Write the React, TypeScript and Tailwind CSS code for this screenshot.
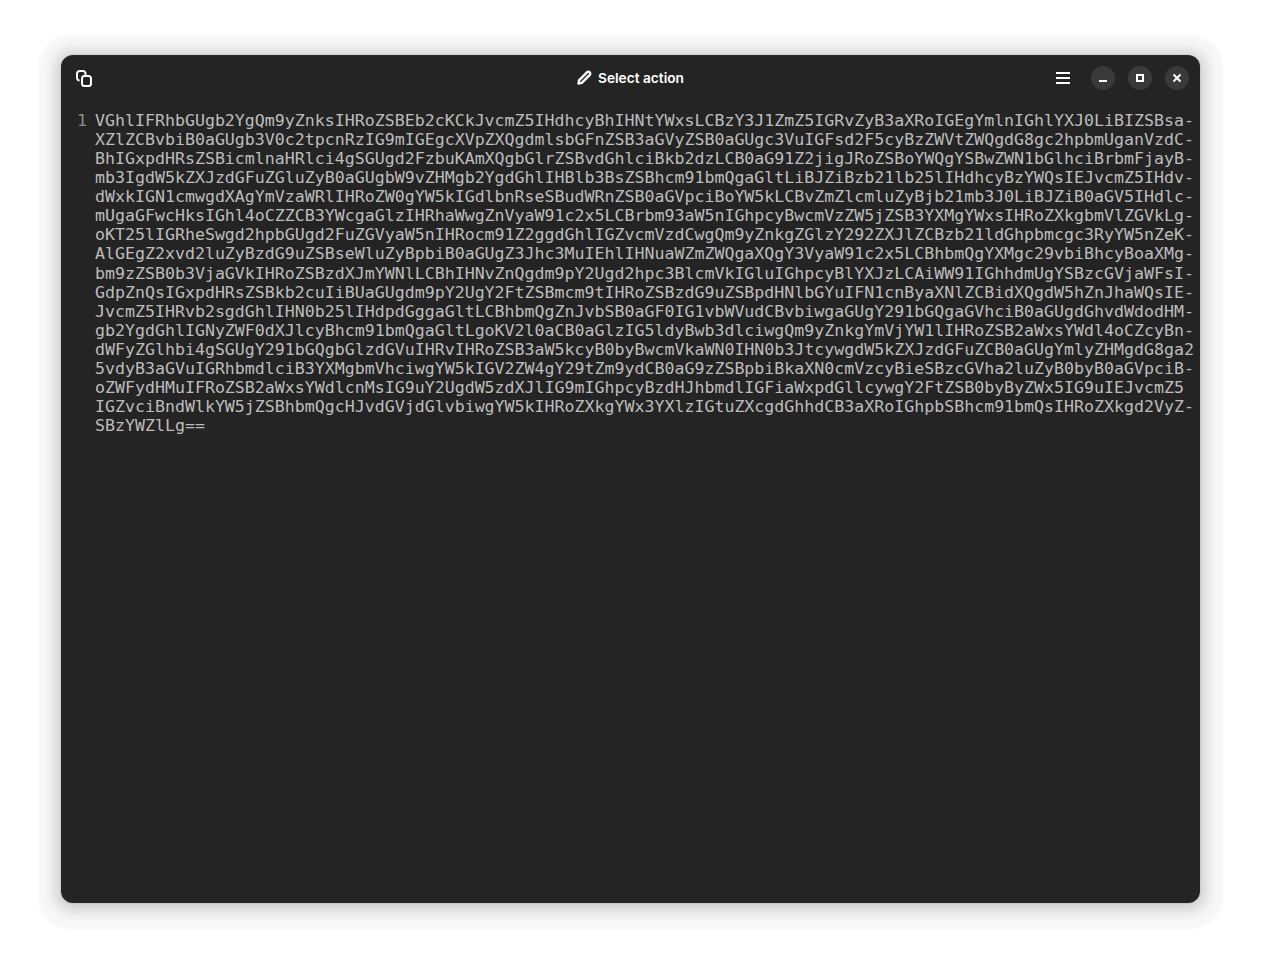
const lines = [
    'VGhlIFRhbGUgb2YgQm9yZnksIHRoZSBEb2cKCkJvcmZ5IHdhcyBhIHNtYWxsLCBzY3J1ZmZ5IGRvZyB3aXRoIGEgYmlnIGhlYXJ0LiBIZSBsa-',
    'XZlZCBvbiB0aGUgb3V0c2tpcnRzIG9mIGEgcXVpZXQgdmlsbGFnZSB3aGVyZSB0aGUgc3VuIGFsd2F5cyBzZWVtZWQgdG8gc2hpbmUganVzdC-',
    'BhIGxpdHRsZSBicmlnaHRlci4gSGUgd2FzbuKAmXQgbGlrZSBvdGhlciBkb2dzLCB0aG91Z2jigJRoZSBoYWQgYSBwZWN1bGlhciBrbmFjayB-',
    'mb3IgdW5kZXJzdGFuZGluZyB0aGUgbW9vZHMgb2YgdGhlIHBlb3BsZSBhcm91bmQgaGltLiBJZiBzb21lb25lIHdhcyBzYWQsIEJvcmZ5IHdv-',
    'dWxkIGN1cmwgdXAgYmVzaWRlIHRoZW0gYW5kIGdlbnRseSBudWRnZSB0aGVpciBoYW5kLCBvZmZlcmluZyBjb21mb3J0LiBJZiB0aGV5IHdlc-',
    'mUgaGFwcHksIGhl4oCZZCB3YWcgaGlzIHRhaWwgZnVyaW91c2x5LCBrbm93aW5nIGhpcyBwcmVzZW5jZSB3YXMgYWxsIHRoZXkgbmVlZGVkLg-',
    'oKT25lIGRheSwgd2hpbGUgd2FuZGVyaW5nIHRocm91Z2ggdGhlIGZvcmVzdCwgQm9yZnkgZGlzY292ZXJlZCBzb21ldGhpbmcgc3RyYW5nZeK-',
    'AlGEgZ2xvd2luZyBzdG9uZSBseWluZyBpbiB0aGUgZ3Jhc3MuIEhlIHNuaWZmZWQgaXQgY3VyaW91c2x5LCBhbmQgYXMgc29vbiBhcyBoaXMg-',
    'bm9zZSB0b3VjaGVkIHRoZSBzdXJmYWNlLCBhIHNvZnQgdm9pY2Ugd2hpc3BlcmVkIGluIGhpcyBlYXJzLCAiWW91IGhhdmUgYSBzcGVjaWFsI-',
    'GdpZnQsIGxpdHRsZSBkb2cuIiBUaGUgdm9pY2UgY2FtZSBmcm9tIHRoZSBzdG9uZSBpdHNlbGYuIFN1cnByaXNlZCBidXQgdW5hZnJhaWQsIE-',
    'JvcmZ5IHRvb2sgdGhlIHN0b25lIHdpdGggaGltLCBhbmQgZnJvbSB0aGF0IG1vbWVudCBvbiwgaGUgY291bGQgaGVhciB0aGUgdGhvdWdodHM-',
    'gb2YgdGhlIGNyZWF0dXJlcyBhcm91bmQgaGltLgoKV2l0aCB0aGlzIG5ldyBwb3dlciwgQm9yZnkgYmVjYW1lIHRoZSB2aWxsYWdl4oCZcyBn-',
    'dWFyZGlhbi4gSGUgY291bGQgbGlzdGVuIHRvIHRoZSB3aW5kcyB0byBwcmVkaWN0IHN0b3JtcywgdW5kZXJzdGFuZCB0aGUgYmlyZHMgdG8ga2',
    '5vdyB3aGVuIGRhbmdlciB3YXMgbmVhciwgYW5kIGV2ZW4gY29tZm9ydCB0aG9zZSBpbiBkaXN0cmVzcyBieSBzcGVha2luZyB0byB0aGVpciB-',
    'oZWFydHMuIFRoZSB2aWxsYWdlcnMsIG9uY2UgdW5zdXJlIG9mIGhpcyBzdHJhbmdlIGFiaWxpdGllcywgY2FtZSB0byByZWx5IG9uIEJvcmZ5',
    'IGZvciBndWlkYW5jZSBhbmQgcHJvdGVjdGlvbiwgYW5kIHRoZXkgYWx3YXlzIGtuZXcgdGhhdCB3aXRoIGhpbSBhcm91bmQsIHRoZXkgd2VyZ-',
    'SBzYWZlLg==',
];

export default function App() {
    return (
        <div className="h-[970px] w-[1261px] bg-white pt-[55px] pl-[61px] overflow-hidden">
            <div className="w-[1139px] h-[848px] rounded-[12px] bg-[#242424] flex flex-col shadow-[0_0_0_1px_rgba(0,0,0,0.05),0_2px_12px_4px_rgba(0,0,0,0.14),0_2px_10px_13px_rgba(0,0,0,0.03),0_3px_2px_23px_rgba(0,0,0,0.03)]">
                {/* Header bar */}
                <div className="h-[46px] shrink-0 grid grid-cols-[1fr_auto_1fr] items-center px-[11px]">
                    <svg className="ml-[4px]" width="16" height="17" viewBox="0 0 16 17" fill="none" stroke="white" strokeWidth="2">
                        <path d="M3.500 10.500A2.500 2.500 0 0 1 1 8V3.500A2.500 2.500 0 0 1 3.500 1H7a2.500 2.500 0 0 1 2.500 2.500V5" />
                        <rect x="6" y="6" width="9" height="10" rx="2.500" />
                    </svg>
                    <div className="flex items-center gap-[6px] text-white text-[13.700px] leading-[20px] font-semibold font-['Inter',sans-serif] -mt-[1px]">
                        <svg width="15" height="15" viewBox="0 0 15 15" fill="none" stroke="white" strokeWidth="2.400" strokeLinejoin="round">
                            <path d="M1.500 13.500l.7-3.300 8-8a1.600 1.600 0 0 1 2.300 0l.3.300a1.600 1.600 0 0 1 0 2.300l-8 8z" />
                        </svg>
                        <span>Select action</span>
                    </div>
                    <div className="flex items-center justify-end">
                        <div className="flex flex-col gap-[3px] w-[14px] mr-[21px]">
                            <div className="h-[2px] bg-white" />
                            <div className="h-[2px] bg-white" />
                            <div className="h-[2px] bg-white" />
                        </div>
                        <div className="flex gap-[13px]">
                            <div className="w-6 h-6 rounded-full bg-[#3a3a3a] flex items-center justify-center">
                                <div className="w-2 h-[2px] bg-white mt-[6px]" />
                            </div>
                            <div className="w-6 h-6 rounded-full bg-[#3a3a3a] flex items-center justify-center">
                                <div className="w-2 h-2 border-2 border-white" />
                            </div>
                            <div className="w-6 h-6 rounded-full bg-[#3a3a3a] flex items-center justify-center">
                                <svg width="10" height="10" viewBox="0 0 10 10" stroke="white" strokeWidth="2">
                                    <path d="M1.500 1.500l7 7M8.500 1.500l-7 7" />
                                </svg>
                            </div>
                        </div>
                    </div>
                </div>

                {/* Text view */}
                <div className="flex pt-[10px] font-['DejaVu_Sans_Mono',monospace] text-[16.600px] leading-[19.060px] text-[#bdbdbc]">
                    <div className="w-[34px] pr-[8px] text-right text-[#8e8e8e]">1</div>
                    <div className="whitespace-pre">
                        {lines.map((line, i) => (
                            <div key={i}>{line}</div>
                        ))}
                    </div>
                </div>
            </div>
        </div>
    );
}
